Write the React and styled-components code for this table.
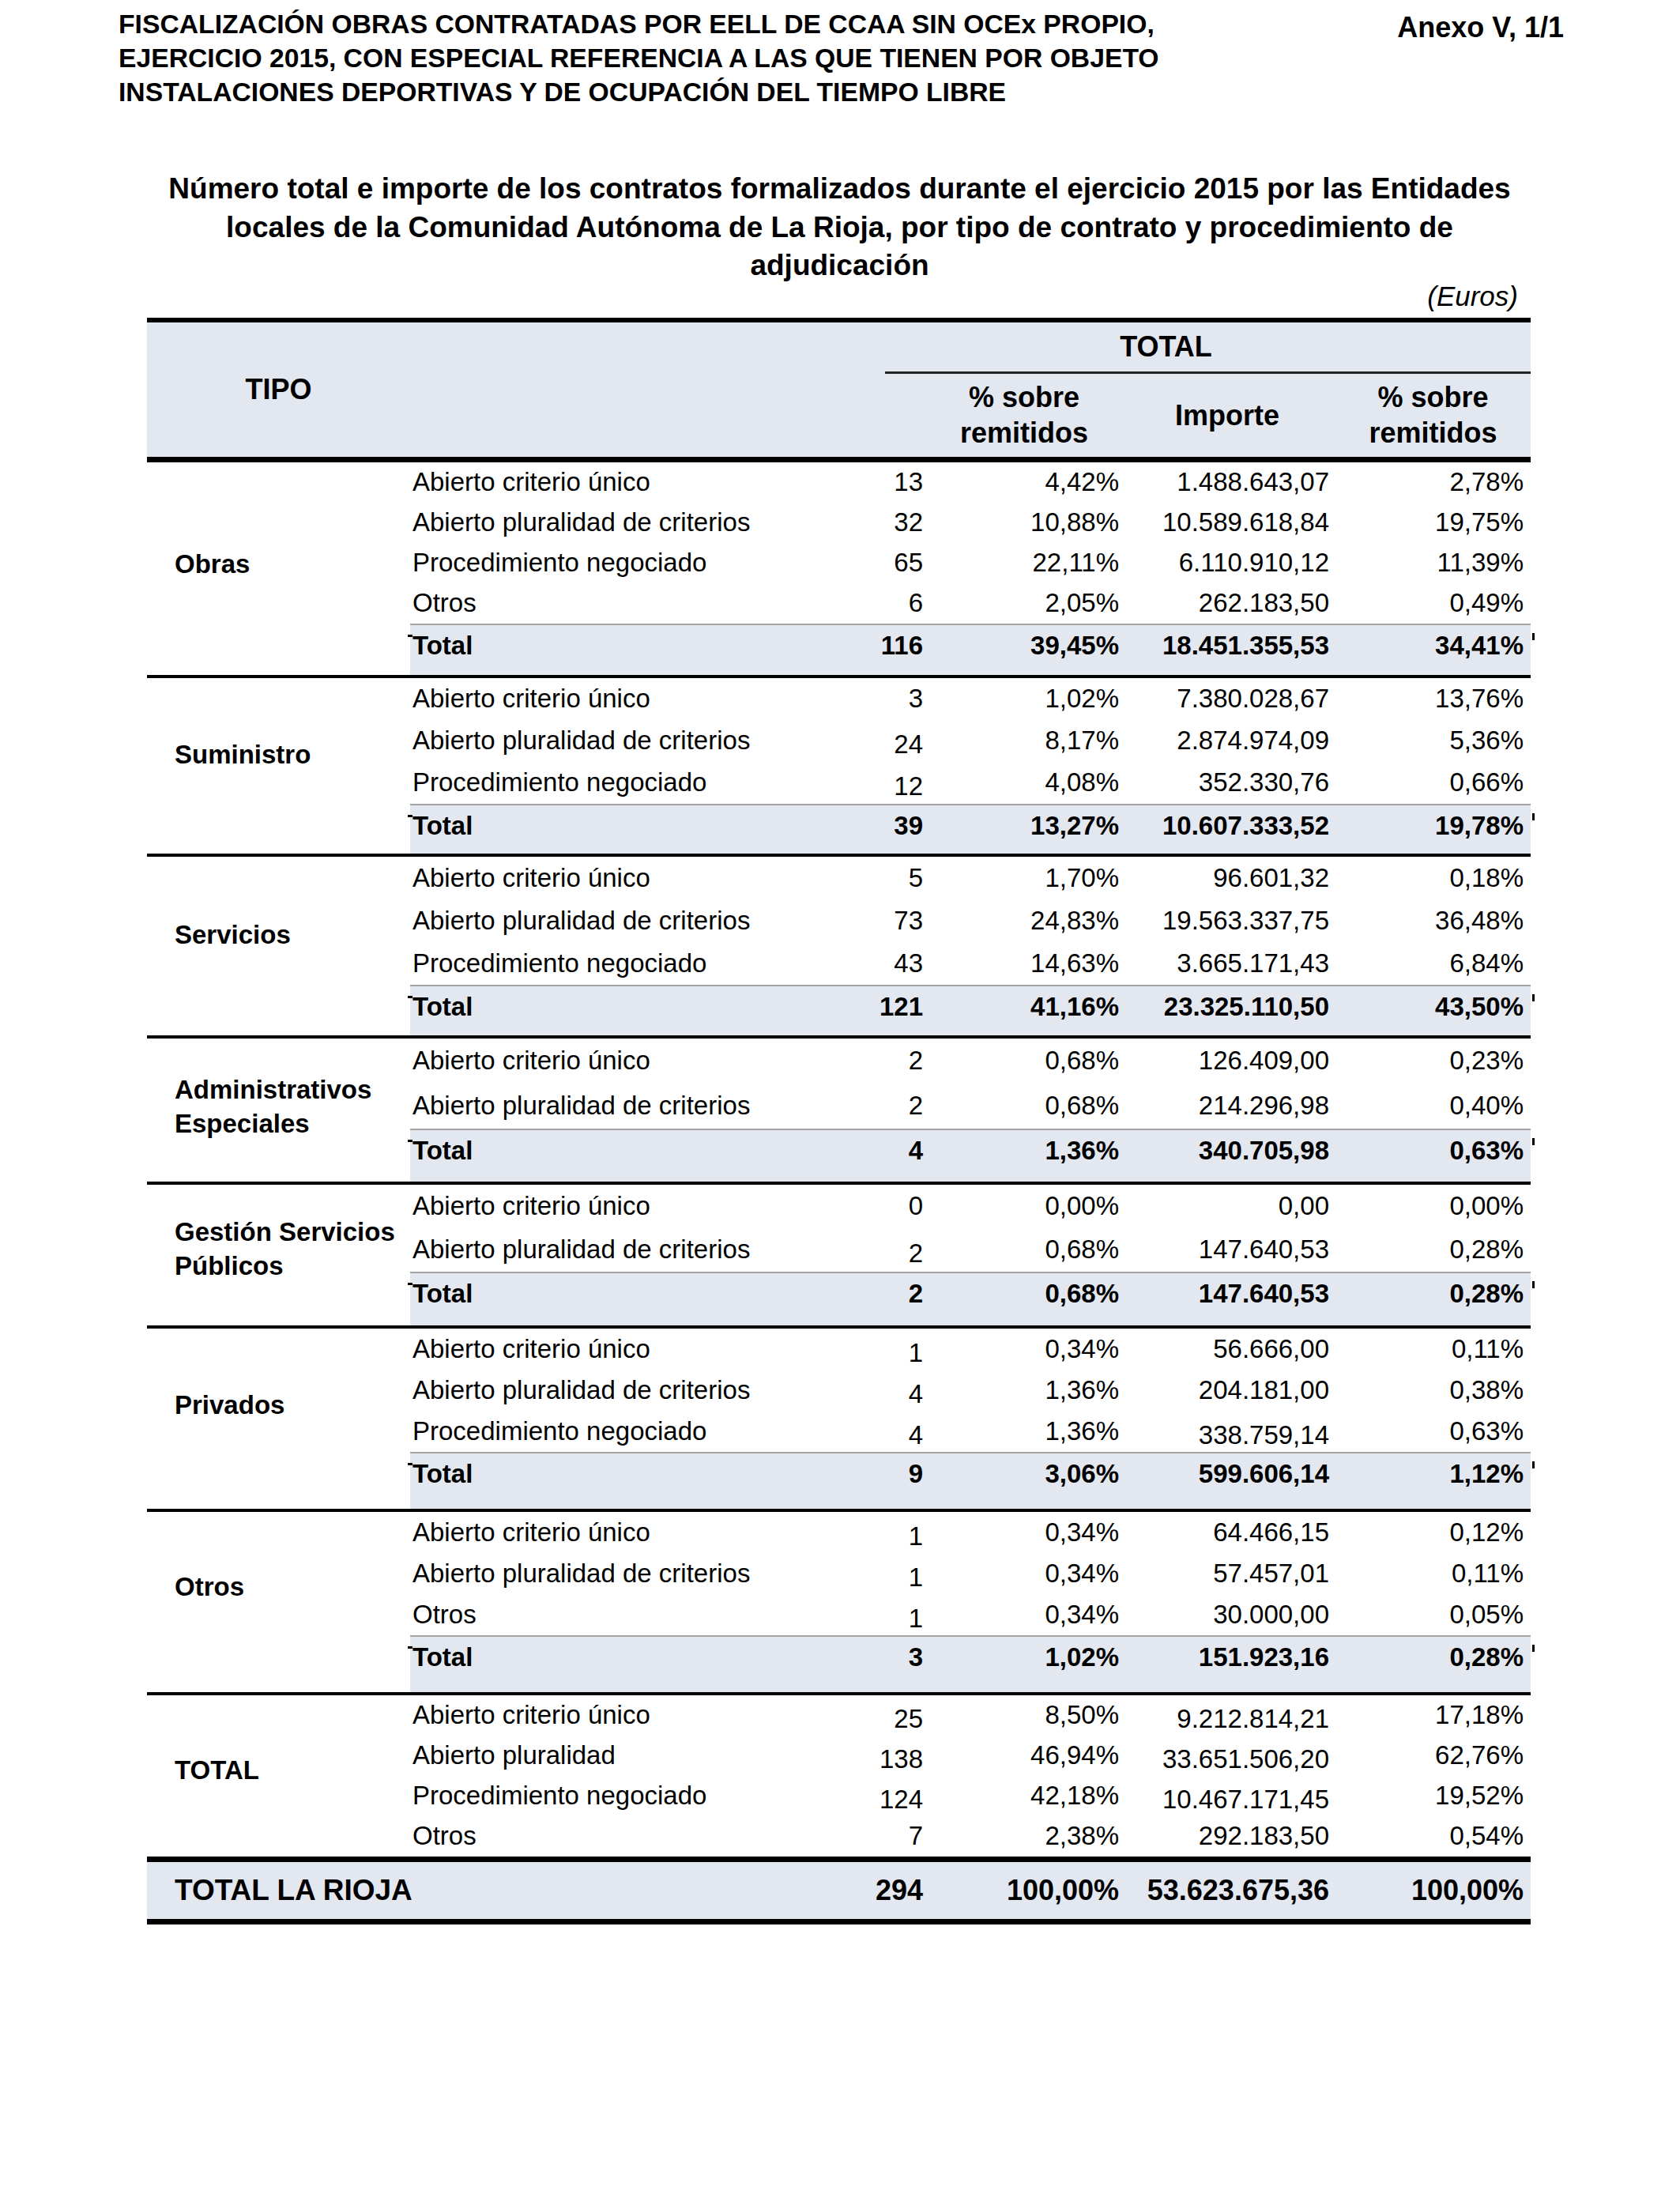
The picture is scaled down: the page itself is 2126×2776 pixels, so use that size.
import React from "react";
import styled, { createGlobalStyle } from "styled-components";

const SHADE = "#e2e7f0";
const BODY_COLS = "601px 56px 240px 274px 247px";
const NUM_PAD = [8, 0, 8, 9];

const GlobalStyle = createGlobalStyle`
  html, body {
    margin: 0;
    padding: 0;
    background: #fff;
  }
  body {
    font-family: "Liberation Sans", Arial, sans-serif;
    color: #000;
  }
`;

const Page = styled.div`
  width: 2126px;
  min-height: 2776px;
  box-sizing: border-box;
  padding: 9px 147px 0 150px;
`;

const TopBar = styled.div`
  display: flex;
  justify-content: space-between;
  align-items: flex-start;
`;

const DocTitle = styled.div`
  font-size: 33.7px;
  font-weight: 700;
  line-height: 43px;
  white-space: nowrap;
`;

const Anexo = styled.div`
  font-size: 36px;
  font-weight: 700;
  line-height: 43px;
  margin-top: 4px;
  white-space: nowrap;
`;

const Subtitle = styled.div`
  margin: 77px 0 0 -4px;
  font-size: 37px;
  font-weight: 700;
  line-height: 48.5px;
  text-align: center;
  white-space: nowrap;
`;

const TableWrap = styled.div`
  margin-left: 36px;
  width: 1751px;
`;

const Euros = styled.div`
  margin-top: -6px;
  padding-right: 16px;
  text-align: right;
  font-size: 35px;
  font-style: italic;
  line-height: 40px;
`;

const Head = styled.div`
  margin-top: 7px;
  display: grid;
  grid-template-columns: 333px ${BODY_COLS};
  grid-template-rows: 65px 105px;
  background: ${SHADE};
  border-top: 6px solid #000;
  border-bottom: 7px solid #000;
  font-size: 36px;
  font-weight: 700;
`;

const HeadCell = styled.div`
  grid-column: ${p => p.col};
  grid-row: ${p => p.row};
  display: flex;
  align-items: center;
  justify-content: center;
  text-align: center;
  line-height: 45px;
  box-sizing: border-box;
  padding-right: ${p => p.pr || 0}px;
  ${p => p.rule && "border-bottom: 3px solid #222;"}
`;

const Block = styled.div`
  display: flex;
  border-bottom: ${p => (p.last ? "none" : "4px solid #000")};
`;

const TipoCell = styled.div`
  width: 333px;
  flex: none;
  box-sizing: border-box;
  padding: 0 0 ${p => p.lift}px 35px;
  display: flex;
  align-items: center;
  font-size: 33px;
  font-weight: 700;
  line-height: 43px;
`;

const Rows = styled.div`
  flex: 1;
  display: flex;
  flex-direction: column;
`;

const Row = styled.div`
  display: grid;
  grid-template-columns: ${BODY_COLS};
  height: ${p => p.h}px;
  box-sizing: border-box;
  align-items: center;
  font-size: 33px;
  line-height: 38px;
`;

const TotalRow = styled(Row)`
  position: relative;
  align-items: start;
  padding-top: 7px;
  background: ${SHADE};
  border-top: 2px solid #a3a3a3;
  font-weight: 700;

  &::before {
    content: "";
    position: absolute;
    left: -3px;
    top: 12px;
    width: 6px;
    height: 3px;
    background: #000;
  }

  &::after {
    content: "";
    position: absolute;
    right: -5px;
    top: 10px;
    width: 3px;
    height: 9px;
    background: #000;
  }
`;

const Proc = styled.div`
  padding-left: 3px;
  white-space: nowrap;
`;

const Num = styled.div`
  position: relative;
  top: ${p => (p.low ? 5 : 0)}px;
  display: flex;
  justify-content: flex-end;
  min-width: 0;
  padding-right: ${p => p.pr}px;
  white-space: nowrap;
`;

const GrandRow = styled.div`
  display: grid;
  grid-template-columns: 934px 56px 240px 274px 247px;
  height: 86px;
  box-sizing: border-box;
  border-top: 7px solid #000;
  border-bottom: 7px solid #000;
  background: ${SHADE};
  align-items: center;
  font-size: 36px;
  font-weight: 700;
  line-height: 40px;
`;

const GrandLabel = styled.div`
  padding-left: 35px;
  font-size: 37px;
  white-space: nowrap;
`;

const blocks = [
  {
    name: ["Obras"],
    lift: 11,
    rowH: 51,
    totalH: 65,
    rows: [
      ["Abierto criterio único", "13", "4,42%", "1.488.643,07", "2,78%"],
      ["Abierto pluralidad de criterios", "32", "10,88%", "10.589.618,84", "19,75%"],
      ["Procedimiento negociado", "65", "22,11%", "6.110.910,12", "11,39%"],
      ["Otros", "6", "2,05%", "262.183,50", "0,49%"]
    ],
    total: ["116", "39,45%", "18.451.355,53", "34,41%"]
  },
  {
    name: ["Suministro"],
    lift: 28,
    rowH: 53,
    totalH: 63,
    rows: [
      ["Abierto criterio único", "3", "1,02%", "7.380.028,67", "13,76%"],
      ["Abierto pluralidad de criterios", "24", "8,17%", "2.874.974,09", "5,36%", [0]],
      ["Procedimiento negociado", "12", "4,08%", "352.330,76", "0,66%", [0]]
    ],
    total: ["39", "13,27%", "10.607.333,52", "19,78%"]
  },
  {
    name: ["Servicios"],
    lift: 28,
    rowH: 54,
    totalH: 64,
    rows: [
      ["Abierto criterio único", "5", "1,70%", "96.601,32", "0,18%"],
      ["Abierto pluralidad de criterios", "73", "24,83%", "19.563.337,75", "36,48%"],
      ["Procedimiento negociado", "43", "14,63%", "3.665.171,43", "6,84%"]
    ],
    total: ["121", "41,16%", "23.325.110,50", "43,50%"]
  },
  {
    name: ["Administrativos", "Especiales"],
    lift: 9,
    rowH: 57,
    totalH: 67,
    rows: [
      ["Abierto criterio único", "2", "0,68%", "126.409,00", "0,23%"],
      ["Abierto pluralidad de criterios", "2", "0,68%", "214.296,98", "0,40%"]
    ],
    total: ["4", "1,36%", "340.705,98", "0,63%"]
  },
  {
    name: ["Gestión Servicios", "Públicos"],
    lift: 16,
    rowH: 55,
    totalH: 68,
    rows: [
      ["Abierto criterio único", "0", "0,00%", "0,00", "0,00%"],
      ["Abierto pluralidad de criterios", "2", "0,68%", "147.640,53", "0,28%", [0]]
    ],
    total: ["2", "0,68%", "147.640,53", "0,28%"]
  },
  {
    name: ["Privados"],
    lift: 34,
    rowH: 52,
    totalH: 72,
    rows: [
      ["Abierto criterio único", "1", "0,34%", "56.666,00", "0,11%", [0]],
      ["Abierto pluralidad de criterios", "4", "1,36%", "204.181,00", "0,38%", [0]],
      ["Procedimiento negociado", "4", "1,36%", "338.759,14", "0,63%", [0, 2]]
    ],
    total: ["9", "3,06%", "599.606,14", "1,12%"]
  },
  {
    name: ["Otros"],
    lift: 38,
    rowH: 52,
    totalH: 72,
    rows: [
      ["Abierto criterio único", "1", "0,34%", "64.466,15", "0,12%", [0]],
      ["Abierto pluralidad de criterios", "1", "0,34%", "57.457,01", "0,11%", [0]],
      ["Otros", "1", "0,34%", "30.000,00", "0,05%", [0]]
    ],
    total: ["3", "1,02%", "151.923,16", "0,28%"]
  },
  {
    name: ["TOTAL"],
    lift: 14,
    rowH: 51,
    last: true,
    rows: [
      ["Abierto criterio único", "25", "8,50%", "9.212.814,21", "17,18%", [0, 2]],
      ["Abierto pluralidad", "138", "46,94%", "33.651.506,20", "62,76%", [0, 2]],
      ["Procedimiento negociado", "124", "42,18%", "10.467.171,45", "19,52%", [0, 2]],
      ["Otros", "7", "2,38%", "292.183,50", "0,54%"]
    ]
  }
];

const Numbers = ({ values, low = [] }) =>
  values.map((v, i) => (
    <Num key={i} pr={NUM_PAD[i]} low={low.includes(i)}>
      {v}
    </Num>
  ));

const ContractBlock = ({ block }) => (
  <Block last={block.last}>
    <TipoCell lift={block.lift}>
      <div>
        {block.name.map(n => (
          <div key={n}>{n}</div>
        ))}
      </div>
    </TipoCell>
    <Rows>
      {block.rows.map(r => (
        <Row key={r[0]} h={block.rowH}>
          <Proc>{r[0]}</Proc>
          <Numbers values={r.slice(1, 5)} low={r[5]} />
        </Row>
      ))}
      {block.total && (
        <TotalRow h={block.totalH}>
          <Proc>Total</Proc>
          <Numbers values={block.total} />
        </TotalRow>
      )}
    </Rows>
  </Block>
);

const App = () => (
  <Page>
    <GlobalStyle />
    <TopBar>
      <DocTitle>
        FISCALIZACIÓN OBRAS CONTRATADAS POR EELL DE CCAA SIN OCEx PROPIO,
        <br />
        EJERCICIO 2015, CON ESPECIAL REFERENCIA A LAS QUE TIENEN POR OBJETO
        <br />
        INSTALACIONES DEPORTIVAS Y DE OCUPACIÓN DEL TIEMPO LIBRE
      </DocTitle>
      <Anexo>Anexo V, 1/1</Anexo>
    </TopBar>

    <Subtitle>
      Número total e importe de los contratos formalizados durante el ejercicio 2015 por las Entidades
      <br />
      locales de la Comunidad Autónoma de La Rioja, por tipo de contrato y procedimiento de
      <br />
      adjudicación
    </Subtitle>

    <TableWrap>
      <Euros>(Euros)</Euros>
      <Head>
        <HeadCell col="1" row="1 / span 2">TIPO</HeadCell>
        <HeadCell col="3 / span 4" row="1" pr={106} rule>
          TOTAL
        </HeadCell>
        <HeadCell col="4" row="2">
          % sobre
          <br />
          remitidos
        </HeadCell>
        <HeadCell col="5" row="2">Importe</HeadCell>
        <HeadCell col="6" row="2">
          % sobre
          <br />
          remitidos
        </HeadCell>
      </Head>

      {blocks.map(b => (
        <ContractBlock key={b.name[0]} block={b} />
      ))}

      <GrandRow>
        <GrandLabel>TOTAL LA RIOJA</GrandLabel>
        <Numbers values={["294", "100,00%", "53.623.675,36", "100,00%"]} />
      </GrandRow>
    </TableWrap>
  </Page>
);

export default App;
